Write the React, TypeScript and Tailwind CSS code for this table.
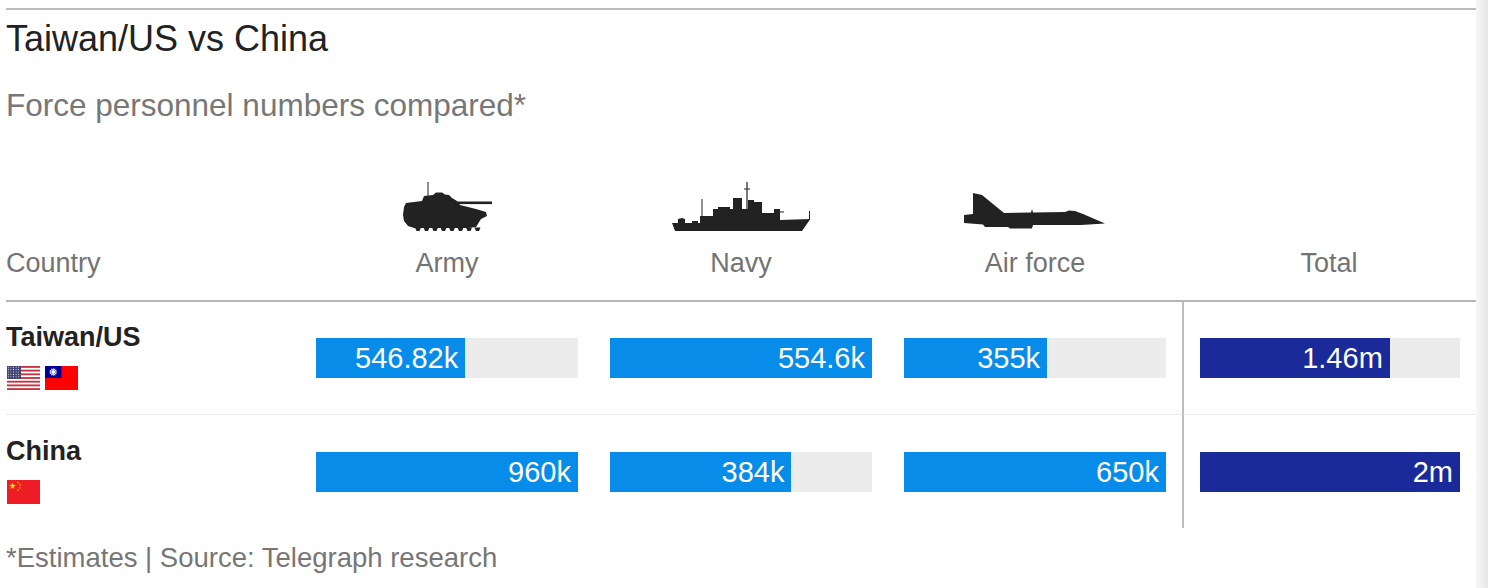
import React from 'react'

// ============================================================================
// Taiwan/US vs China — force personnel comparison table
// ============================================================================

type Row = {
  name: string
  flags: React.ReactNode[]
  army: number
  navy: number
  air: number
  total: number
}

const fmtK = (v: number) => `${v}k`

function UsFlag() {
  return (
    <svg width="33" height="24" viewBox="0 0 33 24" aria-hidden="true">
      <defs>
        <pattern id="us-stars" width="2.6" height="2.4" patternUnits="userSpaceOnUse">
          <circle cx="1.3" cy="1.2" r="0.55" fill="#ffffff" />
        </pattern>
      </defs>
      <rect width="33" height="24" fill="#ffffff" />
      {[0, 2, 4, 6, 8, 10, 12].map(i => (
        <rect key={i} y={(i * 24) / 13} width="33" height={24 / 13} fill="#c8313e" />
      ))}
      <rect width="14" height="13" fill="#3c3b6e" />
      <rect width="14" height="13" fill="url(#us-stars)" />
    </svg>
  )
}

function TaiwanFlag() {
  const rays = Array.from({ length: 24 }, (_, i) => {
    const a = (i * Math.PI) / 12 - Math.PI / 2
    const r = i % 2 === 0 ? 4.4 : 2.6
    return `${8.25 + r * Math.cos(a)},${6 + r * Math.sin(a)}`
  }).join(' ')
  return (
    <svg width="33" height="24" viewBox="0 0 33 24" aria-hidden="true">
      <rect width="33" height="24" fill="#fe0000" />
      <rect width="16.5" height="12" fill="#000095" />
      <polygon points={rays} fill="#ffffff" />
      <circle cx="8.25" cy="6" r="2.3" fill="#000095" />
      <circle cx="8.25" cy="6" r="1.9" fill="#ffffff" />
    </svg>
  )
}

function star(cx: number, cy: number, r: number) {
  return Array.from({ length: 10 }, (_, i) => {
    const a = (i * Math.PI) / 5 - Math.PI / 2
    const rr = i % 2 === 0 ? r : r * 0.4
    return `${cx + rr * Math.cos(a)},${cy + rr * Math.sin(a)}`
  }).join(' ')
}

function ChinaFlag() {
  return (
    <svg width="33" height="24" viewBox="0 0 33 24" aria-hidden="true">
      <rect width="33" height="24" fill="#ee1c25" />
      <polygon points={star(5.5, 6, 3.6)} fill="#ffde00" />
      <polygon points={star(11, 2.4, 1.2)} fill="#ffde00" />
      <polygon points={star(13, 4.8, 1.2)} fill="#ffde00" />
      <polygon points={star(13, 7.8, 1.2)} fill="#ffde00" />
      <polygon points={star(11, 10.2, 1.2)} fill="#ffde00" />
    </svg>
  )
}

function TankIcon() {
  const wheels = [18, 26.5, 35, 43.5, 52, 60.5, 69, 77.5]
  return (
    <svg width="94" height="52" viewBox="0 0 94 52" fill="#222222" aria-hidden="true">
      <rect x="27.5" y="1" width="1" height="18" />
      <rect x="55" y="20.5" width="37" height="2.6" />
      <path d="M6,22 L22,20 L24,15 L33,14 L36,11.5 L42,11.5 L45,13.5 L49,14 L52,17 L57,20 L60,24 L76,28 L86,31 L87,35 L81,38 L76,46 L68,47 L14,47 L8,45 L4,40 L3,34 L4,26 Z" />
      {wheels.map(x => (
        <path key={x} d={`M${x - 3},46.5 L${x + 3},46.5 L${x + 1.5},50 L${x - 1.5},50 Z`} />
      ))}
    </svg>
  )
}

function ShipIcon() {
  return (
    <svg width="142" height="52" viewBox="0 0 142 52" fill="#222222" aria-hidden="true">
      <path d="M2,42 L8,42 L8,38 L12,37 L15,38 L15,42 L22,42 L22,40 L28,40 L28,42 L30,42 L30,35 L43,35 L43,28 L48,28 L48,26 L60,26 L60,28 L63,28 L63,17 L72,17 L72,28 L78,28 L78,19 L84,19 L84,21 L92,21 L92,32 L104,32 L104,28 L110,28 L110,39 L140,38 L139,40 L132,50 L5,50 Z" />
      <rect x="31.5" y="18" width="1" height="20" />
      <rect x="76.4" y="1" width="1.2" height="27" />
      <rect x="74" y="7.5" width="6" height="1" />
      <rect x="108" y="30.5" width="6" height="1" />
      <rect x="139" y="30" width="1" height="9" />
    </svg>
  )
}

function JetIcon() {
  return (
    <svg width="148" height="52" viewBox="0 0 148 52" fill="#222222" aria-hidden="true">
      <path d="M3,34 L12,33 L12,12 L21,14 L43,32 L70,31.5 L71,28 L72,31.5 L104,31 L108,29.5 L114,30 L122,33 L144,42.5 L120,44 L72,44 L71,47.5 L49,47.5 L47,46 L24,46 L22,43.5 L3,42 Z" />
    </svg>
  )
}

function Bar({ value, max, label, color }: { value: number; max: number; label: string; color: string }) {
  return (
    <div className="h-10 w-full bg-[#ececec]">
      <div
        className={`flex h-full items-center justify-end pr-[7px] ${color}`}
        style={{ width: `${(value / max) * 100}%` }}
      >
        <span className="whitespace-nowrap text-[29px] leading-[38px] text-white">{label}</span>
      </div>
    </div>
  )
}

const rows: Row[] = [
  { name: 'Taiwan/US', flags: [<UsFlag key="us" />, <TaiwanFlag key="tw" />], army: 546.82, navy: 554.6, air: 355, total: 1.46 },
  { name: 'China', flags: [<ChinaFlag key="cn" />], army: 960, navy: 384, air: 650, total: 2 },
]

const headers = [
  { label: 'Country', icon: null },
  { label: 'Army', icon: <TankIcon /> },
  { label: 'Navy', icon: <ShipIcon /> },
  { label: 'Air force', icon: <JetIcon /> },
  { label: 'Total', icon: null },
]

export default function App() {
  const maxArmy = Math.max(...rows.map(r => r.army))
  const maxNavy = Math.max(...rows.map(r => r.navy))
  const maxAir = Math.max(...rows.map(r => r.air))
  const maxTotal = Math.max(...rows.map(r => r.total))

  return (
    <div className="flex min-h-screen w-full bg-white font-['Liberation_Sans',Arial,sans-serif]">
      <main className="ml-[6px] w-[1470px] shrink-0">
        {/* Top rule */}
        <div className="mt-[8px] h-[2px] bg-[#bdbdbd]" />

        {/* Header */}
        <h1 className="mt-[9px] text-[36px] leading-[40px] text-[#222222]">Taiwan/US vs China</h1>
        <p className="mt-[28px] text-[31.5px] leading-[36px] text-[#777777]">Force personnel numbers compared*</p>

        {/* Column heads */}
        <div className="mt-[58px] grid grid-cols-[294px_294px_294px_294px_294px]">
          {headers.map((h, i) => (
            <div key={h.label} className={i === 0 ? 'flex flex-col' : 'flex flex-col items-center'}>
              <div className="flex h-[52px] w-full items-end justify-center">{h.icon}</div>
              <span className="mt-[14px] text-[27px] leading-[32px] text-[#737373]">{h.label}</span>
            </div>
          ))}
        </div>
        <div className="mt-[21px] h-[2px] bg-[#b5b5b5]" />

        {/* Data rows */}
        <div className="grid grid-cols-[294px_294px_294px_294px_294px]">
          {rows.map((r, idx) => {
            const first = idx === 0
            const edge = first ? 'h-[113px] border-b border-[#e9e9e9]' : 'h-[113px]'
            return (
              <React.Fragment key={r.name}>
                <div className={`flex flex-col ${first ? 'pt-[19px]' : 'pt-[20px]'} ${edge}`}>
                  <span className="text-[27px] font-bold leading-[32px] text-[#222222]">{r.name}</span>
                  <div className="mt-[13px] flex gap-[5px] pl-px">{r.flags}</div>
                </div>
                <div className={`flex items-center px-4 ${edge}`}>
                  <Bar value={r.army} max={maxArmy} label={fmtK(r.army)} color="bg-[#078de9]" />
                </div>
                <div className={`flex items-center px-4 ${edge}`}>
                  <Bar value={r.navy} max={maxNavy} label={fmtK(r.navy)} color="bg-[#078de9]" />
                </div>
                <div className={`flex items-center px-4 ${edge}`}>
                  <Bar value={r.air} max={maxAir} label={fmtK(r.air)} color="bg-[#078de9]" />
                </div>
                <div className={`flex items-center border-l-2 border-l-[#bdbdbd] px-4 ${edge}`}>
                  <Bar value={r.total} max={maxTotal} label={`${r.total}m`} color="bg-[#1b2a99]" />
                </div>
              </React.Fragment>
            )
          })}
        </div>

        {/* Footnote */}
        <p className="mt-[14px] text-[27.5px] leading-[32px] text-[#767676]">*Estimates | Source: Telegraph research</p>
      </main>
      <div className="flex-1 bg-linear-to-r from-[#f7f7f7] to-[#e6e6e6]" />
    </div>
  )
}
